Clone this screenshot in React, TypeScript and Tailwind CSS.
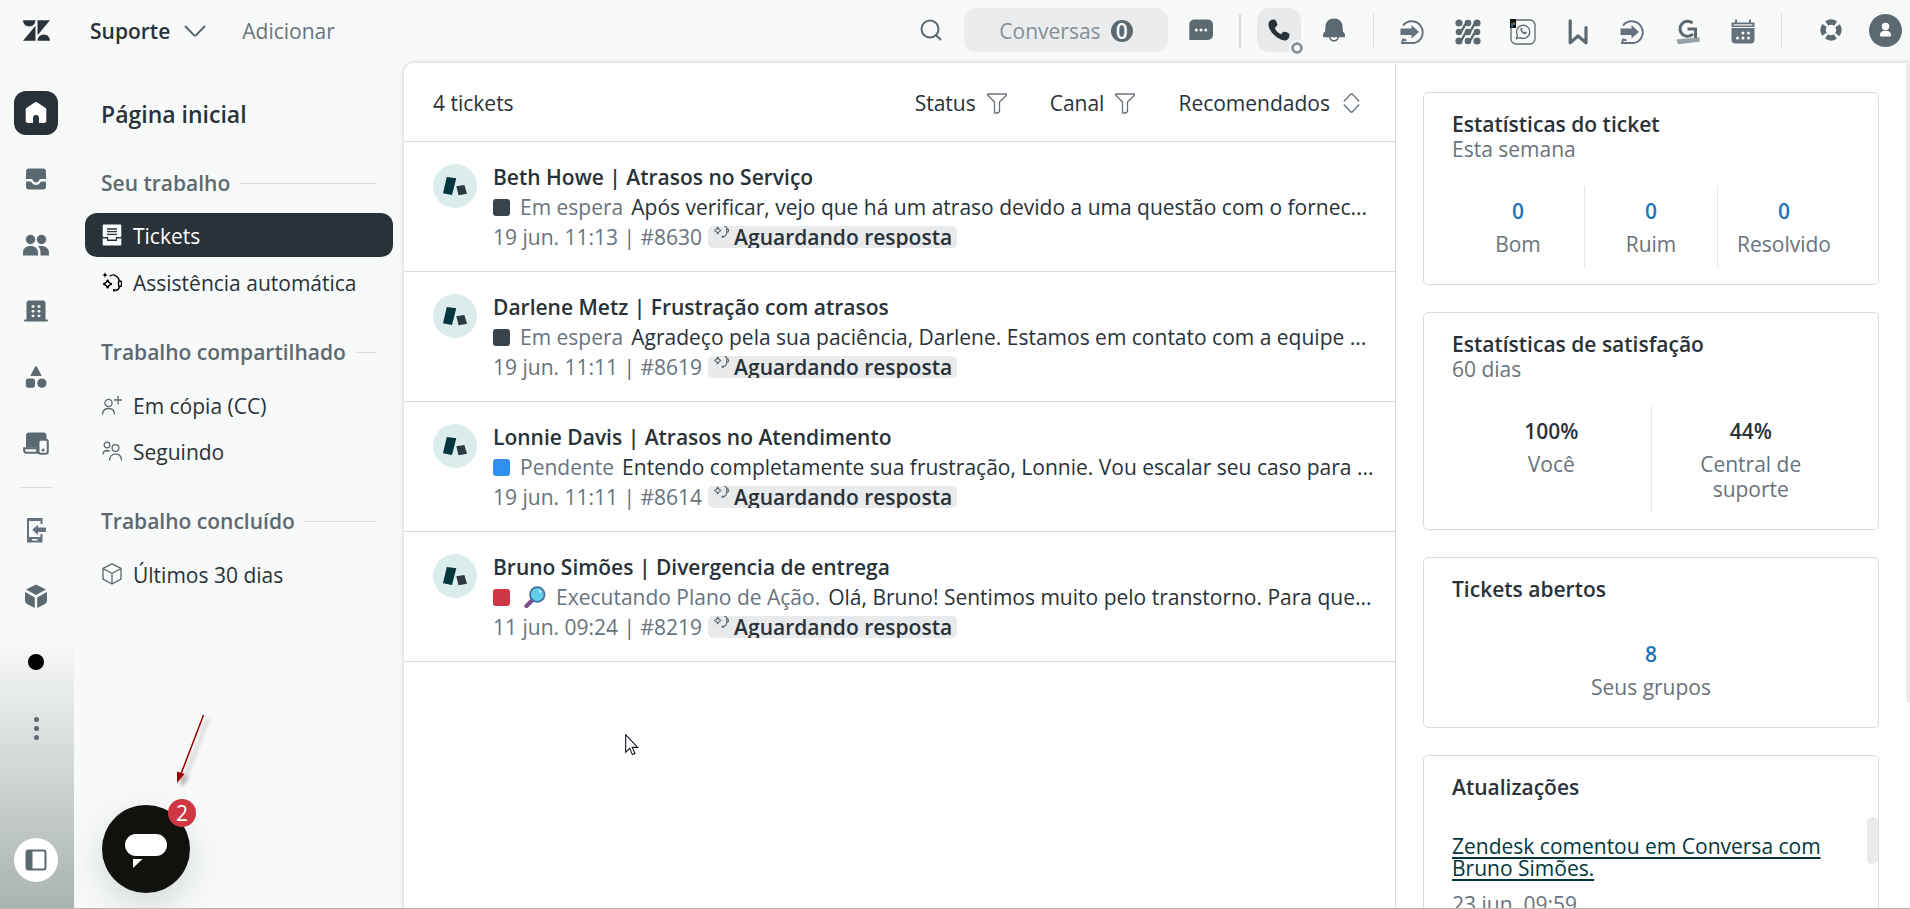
import type { ReactNode } from 'react';

interface Ticket {
  id: string;
  title: string;
  status: string;
  statusColor: string;
  message: string;
  date: string;
  magnifier?: boolean;
}

interface Stat {
  value: string;
  label: string;
}

const tickets: Ticket[] = [
  {
    id: '#8630',
    title: 'Beth Howe | Atrasos no Serviço',
    status: 'Em espera',
    statusColor: 'bg-[#39434b]',
    message: 'Após verificar, vejo que há um atraso devido a uma questão com o fornec...',
    date: '19 jun. 11:13',
  },
  {
    id: '#8619',
    title: 'Darlene Metz | Frustração com atrasos',
    status: 'Em espera',
    statusColor: 'bg-[#39434b]',
    message: 'Agradeço pela sua paciência, Darlene. Estamos em contato com a equipe ...',
    date: '19 jun. 11:11',
  },
  {
    id: '#8614',
    title: 'Lonnie Davis | Atrasos no Atendimento',
    status: 'Pendente',
    statusColor: 'bg-[#3091ec]',
    message: 'Entendo completamente sua frustração, Lonnie. Vou escalar seu caso para ...',
    date: '19 jun. 11:11',
  },
  {
    id: '#8219',
    title: 'Bruno Simões | Divergencia de entrega',
    status: 'Executando Plano de Ação.',
    statusColor: 'bg-[#cd3642]',
    message: 'Olá, Bruno! Sentimos muito pelo transtorno. Para que...',
    date: '11 jun. 09:24',
    magnifier: true,
  },
];

const HomeIcon = () => (
  <svg width="22" height="22" viewBox="0 0 22 22" fill="currentColor">
    <path d="M9.6.6a2.4 2.4 0 0 1 2.8 0l7.8 5.2A2 2 0 0 1 21.3 7.600V18.500a2.500 2.500 0 0 1-2.500 2.500H14v-5a3 3 0 0 0-6 0v5H3.200A2.500 2.500 0 0 1 .7 18.500V7.600a2 2 0 0 1 1.100-1.800z" />
  </svg>
);

const InboxIcon = () => (
  <svg width="22" height="22" viewBox="0 0 22 22" fill="currentColor">
    <path d="M4 .5h14a3 3 0 0 1 3 3V11h-5.500c-1.200 0-1.700 3.500-4.500 3.500S7.700 11 6.500 11H1V3.500a3 3 0 0 1 3-3z" />
    <path d="M1 13.500h4.500c1.300 0 1.800 3.500 5.500 3.500s4.200-3.500 5.500-3.500H21v5a3 3 0 0 1-3 3H4a3 3 0 0 1-3-3z" />
  </svg>
);

const PeopleIcon = () => (
  <svg width="28" height="22" viewBox="0 0 28 22" fill="currentColor">
    <circle cx="8.500" cy="5.500" r="4.700" />
    <circle cx="19.500" cy="5.500" r="4.700" />
    <path d="M1 21v-2.500c0-4 3-6.500 7.500-6.500s7.500 2.500 7.500 6.500V21a.6.6 0 0 1-.6.6H1.600A.6.6 0 0 1 1 21z" />
    <path d="M16 12.300c6-1.300 11 1.200 11 6.200V21a.6.6 0 0 1-.6.6H18.500v-3.500c0-2.300-.8-4.200-2.500-5.800z" />
  </svg>
);

const BuildingIcon = () => (
  <svg width="24" height="22" viewBox="0 0 24 22">
    <path d="M5 .5h14a2.500 2.500 0 0 1 2.500 2.500v16.500H23a.8.8 0 0 1 0 2H1a.8.8 0 0 1 0-2h1.500V3A2.500 2.500 0 0 1 5 .5z" fill="currentColor" />
    <g fill="#f8faf9">
      <rect x="7.500" y="5.300" width="3" height="2.400" rx="1" />
      <rect x="13.500" y="5.300" width="3" height="2.400" rx="1" />
      <rect x="7.500" y="10" width="3" height="2.400" rx="1" />
      <rect x="13.500" y="10" width="3" height="2.400" rx="1" />
      <rect x="7.500" y="14.700" width="3" height="2.400" rx="1" />
      <rect x="13.500" y="14.700" width="3" height="2.400" rx="1" />
    </g>
  </svg>
);

const ShapesIcon = () => (
  <svg width="22" height="22" viewBox="0 0 22 22" fill="currentColor">
    <path d="M10.100.8a1 1 0 0 1 1.800 0l4.400 8.200a.6.6 0 0 1-.6.9H6.300a.6.6 0 0 1-.6-.9z" />
    <rect x=".8" y="12.500" width="9.200" height="9.200" rx="2.300" />
    <circle cx="16.900" cy="17.100" r="4.700" />
  </svg>
);

const DevicesIcon = () => (
  <svg width="26" height="23" viewBox="0 0 26 23">
    <path d="M6 .5h14.500a3 3 0 0 1 3 3V7H18a3 3 0 0 0-3 3v5.500H3v-12a3 3 0 0 1 3-3z" fill="currentColor" />
    <path d="M1.200 16.200h13v4.600H3.500a2.300 2.300 0 0 1-2.300-2.300z" fill="#f8faf9" stroke="currentColor" strokeWidth="2" />
    <rect x="15.500" y="7.700" width="9.300" height="14" rx="2.200" fill="#f8faf9" stroke="currentColor" strokeWidth="2" />
    <circle cx="20.100" cy="18" r="1.500" fill="currentColor" />
  </svg>
);

const PhoneArrowIcon = () => (
  <svg width="20" height="26" viewBox="0 0 20 26" fill="#66717e">
    <path d="M1 1h15.500v6h-2V4H3v16h11.500v-3h2v8.500H1z" />
    <path d="M12 10.500h8V15h-8v3L6.200 12.800 12 7.800z" />
    <rect x="6" y="22" width="5.500" height="1.500" fill="#f8faf9" />
  </svg>
);

const CubeIcon = () => (
  <svg width="24" height="24" viewBox="0 0 24 24" fill="currentColor">
    <path d="M12 .5 22 5.600 12 11 2 5.600z" />
    <path d="M1 8l9.800 5.400V24L2.600 19.700A3 3 0 0 1 1 17z" />
    <path d="M23 8l-9.800 5.400V24l8.200-4.300A3 3 0 0 0 23 17z" />
  </svg>
);

const PanelIcon = () => (
  <svg width="22" height="22" viewBox="0 0 22 22">
    <rect x="1.500" y="1.500" width="19" height="19" rx="2" fill="none" stroke="currentColor" strokeWidth="2" />
    <path d="M2 2h5.500v18H2z" fill="currentColor" />
  </svg>
);

const BotSparkIcon = () => (
  <svg width="20" height="20" viewBox="0 0 20 20" fill="none" stroke="currentColor" strokeWidth="1.400">
    <path d="M5.600 7.600c.6 2.800 1.600 3.800 4.300 4.400-2.700.6-3.700 1.700-4.300 4.400C5 13.700 4 12.600 1.200 12 4 11.400 5 10.400 5.600 7.600z" />
    <path d="M3 0c.3 1.900 1 2.600 3 3-2 .4-2.700 1.100-3 3-.3-1.900-1-2.600-3-3 2-.4 2.700-1.100 3-3z" fill="currentColor" stroke="none" />
    <path d="M7.500 4.300C9.500 2.700 12 2.500 14 3.800c1.800 1.100 2.800 2.700 3.200 5" />
    <rect x="16.500" y="9" width="3" height="5.500" rx="1.500" />
    <path d="M17.500 14.500c-.5 2.500-1.800 3.700-4 4" />
    <path d="M11 18.300h2.500" strokeWidth="2.400" />
  </svg>
);

const BadgeSparkIcon = () => (
  <svg width="17" height="13" viewBox="0 0 17 13" fill="none" stroke="currentColor" strokeWidth="1.200">
    <path d="M4.700.9c.5 2.300 1.300 3.100 3.500 3.600-2.200.5-3 1.400-3.500 3.600-.5-2.200-1.300-3.100-3.500-3.600C3.400 4 4.200 3.200 4.700.9z" />
    <path d="M11 0c1.200.1 2.200.9 2.700 2v5M13.700 2.700c2.400-.5 2.400 4.100 0 3.800M13.700 7c-.3 2-1.400 3.200-3 3.700" />
    <path d="M8.700 10.700h2.300" strokeWidth="2" />
  </svg>
);

const FilterIcon = () => (
  <svg width="20" height="21" viewBox="0 0 20 21" fill="none" stroke="currentColor" strokeWidth="1.300">
    <path d="M.7 1h18.600v1.300L12.500 9v8.200c0 1.400-1 2.800-2.500 2.800H7.500V9L.7 2.300z" strokeLinejoin="round" />
  </svg>
);

const SearchIcon = () => (
  <svg width="22" height="22" viewBox="0 0 22 22" fill="none" stroke="currentColor" strokeWidth="2" strokeLinecap="round">
    <circle cx="10" cy="10" r="8.500" />
    <path d="M16.500 16.500l4 4" />
  </svg>
);

const ChatIcon = () => (
  <svg width="24" height="22" viewBox="0 0 24 22">
    <path d="M5 .5h14a5 5 0 0 1 5 5v10.500a5 5 0 0 1-5 5H.3V5.500a5 5 0 0 1 4.700-5z" fill="currentColor" />
    <g fill="#fff">
      <circle cx="7.300" cy="11" r="1.500" />
      <circle cx="12" cy="11" r="1.500" />
      <circle cx="16.700" cy="11" r="1.500" />
    </g>
  </svg>
);

const HandsetIcon = () => (
  <svg width="22" height="22" viewBox="0 0 22 22" fill="#293239">
    <path d="M1.200 2.600C2.500.9 5 .1 6.800.7c1.300.5 2.300 3 2.500 5 .1 1.700-2.600 2.500-2.300 3.500.6 2.200 3.500 5.100 5.700 5.700 1 .3 1.900-2.400 3.600-2.200 2 .2 4.500 1.200 5 2.500.5 1.800-.3 4.300-2 5.600-1.500 1-4.600.8-8-1.100C6.900 17.300 3.500 13.800 1.500 9.700.2 6.900.2 4 1.200 2.600z" />
  </svg>
);

const BellIcon = () => (
  <svg width="22" height="24" viewBox="0 0 22 24">
    <path d="M6.500 18.300a4.500 4.500 0 0 0 9 0" fill="#f8faf9" stroke="currentColor" strokeWidth="1.600" />
    <path d="M11 .5c5.300 0 8.300 3.500 8.600 8l.4 5.500c1.800.6 2 1.700 2 4.500 0 .5-.3.8-.8.8H.8A.8.8 0 0 1 0 18.500c0-2.800.2-3.900 2-4.500l.4-5.500C2.700 4 5.700.5 11 .5z" fill="currentColor" />
  </svg>
);

const CircleArrowIcon = () => (
  <svg width="26" height="26" viewBox="0 0 26 26">
    <path d="M3 6.500A11 11 0 1 1 14 24H2l1-3.500 3.500 1" fill="none" stroke="#66717e" strokeWidth="1.900" />
    <path d="M.5 9.500h11V6L19 13l-7.500 6.500V16H.5z" fill="#66717e" />
  </svg>
);

const DotsGridIcon = () => (
  <svg width="26" height="26" viewBox="0 0 26 26" fill="currentColor" stroke="currentColor">
    <g stroke="none">
      <circle cx="4" cy="4" r="3.600" />
      <circle cx="13" cy="4" r="3.300" />
      <circle cx="22" cy="4" r="3.600" />
      <circle cx="4" cy="13" r="3.300" />
      <circle cx="13" cy="13" r="3.300" />
      <circle cx="22" cy="13" r="3.300" />
      <circle cx="4" cy="22" r="3.600" />
      <circle cx="13" cy="22" r="3.300" />
      <circle cx="22" cy="22" r="3.600" />
    </g>
    <path d="M4 13c5 0 4-9 9-9M4 22c5 0 4-9 9-9s4-9 9-9M13 22c5 0 4-9 9-9" fill="none" strokeWidth="2.400" />
  </svg>
);

const WhatsappIcon = () => (
  <svg width="26" height="26" viewBox="0 0 26 26" fill="none">
    <rect x="1" y="1" width="24" height="24" rx="5" stroke="currentColor" strokeWidth="1.300" />
    <path d="M6.500 19.500l.9-3.500A6.600 6.600 0 1 1 10 18.600z" stroke="currentColor" strokeWidth="1.300" />
    <path d="M10.500 9.500c-1 2 3 6.500 5.500 5.500l.8-1.500-2-1-1 .8-2-2 .7-1-.8-1.600z" fill="currentColor" />
    <rect x="0" y="0" width="6" height="9" fill="#111" />
    <path d="M2 4v4" stroke="#1f8ad0" strokeWidth="1.500" />
    <path d="M4 3v3" stroke="#e8b33c" strokeWidth="1" />
  </svg>
);

const WIcon = () => (
  <svg width="20" height="26" viewBox="0 0 20 26" fill="none" stroke="currentColor" strokeWidth="3.200" strokeLinejoin="round">
    <path d="M2.200 1.800v22L10 17l8 6.800V8.500" strokeLinecap="round" />
  </svg>
);

const GIcon = () => (
  <svg width="24" height="26" viewBox="0 0 24 26">
    <path d="M.5 20.500l23-2.300v4.500L2 25.300z" fill="#98a1a6" />
    <path d="M16.500 4.200A7.500 7.500 0 1 0 17 15" fill="none" stroke="currentColor" strokeWidth="3" />
    <path d="M11.500 8.500H21V19h-3v-7.500h-6.500z" fill="currentColor" />
  </svg>
);

const CalendarIcon = () => (
  <svg width="24" height="26" viewBox="0 0 24 26" fill="#66717e">
    <path d="M.5 3.500H4V.5h2v3h12v-3h2v3h3.500V8H.5z" />
    <path d="M2.500 5.300h19v1.200h-19z" fill="#f8faf9" />
    <path d="M.5 9h23v11.500a4 4 0 0 1-4 4h-15a4 4 0 0 1-4-4z" />
    <g fill="#fff">
      <circle cx="12" cy="14" r="1.500" />
      <circle cx="17.500" cy="14" r="1.500" />
      <circle cx="6.500" cy="19" r="1.500" />
      <circle cx="12" cy="19" r="1.500" />
      <circle cx="17.500" cy="19" r="1.500" />
    </g>
  </svg>
);

const LifebuoyIcon = () => (
  <svg width="22" height="22" viewBox="0 0 22 22" fill="none" stroke="currentColor">
    <circle cx="11" cy="11" r="7.800" strokeWidth="5.400" strokeDasharray="9.250 3" strokeDashoffset="-1.500" transform="rotate(45 11 11)" />
  </svg>
);

const UserAvatarIcon = () => (
  <svg width="33" height="33" viewBox="0 0 33 33">
    <circle cx="16.500" cy="16.500" r="16.500" fill="currentColor" />
    <circle cx="16.500" cy="12.500" r="3.700" fill="#fff" />
    <path d="M11 20.500c0-2.500 2-3.800 5.500-3.800s5.500 1.300 5.500 3.800v1a1 1 0 0 1-1 1h-9a1 1 0 0 1-1-1z" fill="#fff" />
  </svg>
);

const TicketIcon = () => (
  <svg width="20" height="22" viewBox="0 0 20 22">
    <path d="M1.500.5h17a.8.8 0 0 1 .8.8V13h-5.500v2.500H6.200V13H.7V1.300a.8.8 0 0 1 .8-.8z" fill="#fff" />
    <path d="M.7 14.500H5V17h10v-2.500h4.300v6.200a.8.8 0 0 1-.8.8h-17a.8.8 0 0 1-.8-.8z" fill="#fff" />
    <path d="M5 5h10M5 7.700h10M5 10.400h10" stroke="#293239" strokeWidth="1.300" />
  </svg>
);

const UserPlusIcon = () => (
  <svg width="20" height="20" viewBox="0 0 20 20" fill="none" stroke="currentColor" strokeWidth="1.300">
    <circle cx="6.500" cy="8" r="3.600" />
    <path d="M.6 19.500c0-4 2.200-6 6-6s6 2 6 6M16 .8v8.500M11.700 5h8.300" />
  </svg>
);

const UsersIcon = () => (
  <svg width="20" height="20" viewBox="0 0 20 20" fill="none" stroke="currentColor" strokeWidth="1.300">
    <circle cx="5" cy="4" r="2.800" />
    <circle cx="13.500" cy="7" r="3.400" />
    <path d="M1 13.500C1 11 2.200 9.700 4.700 9.500c1.300 0 2.300.2 3.200.8M7.500 19.500c0-4 2.200-6.300 6-6.300s6 2.300 6 6.300" />
  </svg>
);

const BoxIcon = () => (
  <svg width="20" height="22" viewBox="0 0 20 22" fill="none" stroke="currentColor" strokeWidth="1.300" strokeLinejoin="round">
    <path d="M10 .8l9 4.600v10.700L10 21l-9-4.900V5.400zM1 5.500L10 10.300l9-4.800M10 10.300V21" />
  </svg>
);

const MagnifierIcon = () => (
  <svg width="22" height="22" viewBox="0 0 22 22">
    <path d="M9 13.500L2.500 20" stroke="#7d4c90" strokeWidth="4.200" strokeLinecap="round" />
    <circle cx="13.300" cy="8.500" r="7.300" fill="#63cdea" stroke="#3c6f9f" strokeWidth="1.700" />
    <circle cx="16" cy="5.500" r="1.200" fill="#d6f3fc" />
  </svg>
);

const AvatarMark = () => (
  <svg className="mt-[2px] shrink-0" width="44" height="44" viewBox="0 0 44 44">
    <circle cx="22" cy="22" r="22" fill="#daeceb" />
    <path d="M13.800 13l9.500 1.300L19 31l-9-1.700z" fill="#03363d" />
    <path d="M23.300 22.300l8.100-1.300 2.600 8.700-8.400 1.600z" fill="#2f3941" />
  </svg>
);

const railItems: { label: string; icon: ReactNode }[] = [
  { label: 'Visualizações', icon: <InboxIcon /> },
  { label: 'Clientes', icon: <PeopleIcon /> },
  { label: 'Organizações', icon: <BuildingIcon /> },
  { label: 'Objetos', icon: <ShapesIcon /> },
  { label: 'Dispositivos', icon: <DevicesIcon /> },
];

const appItems: { label: string; icon: ReactNode }[] = [
  { label: 'Encaminhar', icon: <CircleArrowIcon /> },
  { label: 'Integrações', icon: <DotsGridIcon /> },
  { label: 'WhatsApp', icon: <WhatsappIcon /> },
  { label: 'W', icon: <WIcon /> },
  { label: 'Transferir', icon: <CircleArrowIcon /> },
  { label: 'G', icon: <GIcon /> },
  { label: 'Calendário', icon: <CalendarIcon /> },
];

function IconButton({ label, children }: { label: string; children: ReactNode }) {
  return (
    <button aria-label={label} className="flex h-11 w-[55px] shrink-0 items-center justify-center">
      {children}
    </button>
  );
}

function Header() {
  return (
    <header className="flex h-[62px] shrink-0 items-center pr-[3px] pb-[2px] text-[#5c6970]">
      <a href="#" aria-label="Zendesk" className="flex w-[72px] justify-center">
        <svg width="27" height="27" viewBox="0 0 24 24" fill="#293239">
          <path d="M12.914 2.904V16.290L24 2.905H12.914zM0 2.906C0 5.966 2.483 8.450 5.543 8.450s5.542-2.484 5.543-5.544H0zm11.086 4.807L0 21.096h11.086V7.713zm7.370 7.840c-3.063 0-5.542 2.480-5.542 5.543H24c0-3.060-2.480-5.543-5.543-5.543z" />
        </svg>
      </a>
      <button className="ml-[18px] flex items-center gap-[14px] pt-[2px] font-semibold text-[#293239]">
        Suporte
        <svg width="22" height="12" viewBox="0 0 22 12" fill="none" stroke="#5c6970" strokeWidth="2" strokeLinecap="round" strokeLinejoin="round">
          <path d="M1.500 1.500l8 8.300a2 2 0 0 0 3 0l8-8.300" />
        </svg>
      </button>
      <button className="ml-9 pt-[2px] text-[#68737d]">Adicionar</button>
      <div className="ml-auto flex items-center">
        <IconButton label="Pesquisar"><SearchIcon /></IconButton>
        <button className="ml-[6px] flex h-11 w-[204px] items-center justify-center gap-[10px] rounded-xl bg-[#ebecee] pt-[2px] text-[#848f99]">
          Conversas
          <span className="flex size-[22px] items-center justify-center rounded-full bg-[#5c6970] font-semibold text-white">0</span>
        </button>
        <div className="ml-[5px]">
          <IconButton label="Mensagens"><ChatIcon /></IconButton>
        </div>
        <div className="mr-3 ml-[11px] h-[33px] w-[2px] bg-[#d8dcde]" />
        <button aria-label="Telefone" className="relative mr-[5px] ml-1 flex size-11 items-center justify-center rounded-xl bg-[#e8eaec]">
          <HandsetIcon />
          <span className="absolute -right-[2px] -bottom-[2px] size-3 rounded-full border-[3px] border-[#87929d] bg-white outline-2 outline-[#f8faf9]" />
        </button>
        <IconButton label="Notificações"><BellIcon /></IconButton>
        <div className="mr-[11px] ml-3 h-[33px] w-px bg-[#d8dcde]" />
        <div className="flex pt-[3px]">
          {appItems.map((item) => (
            <IconButton key={item.label} label={item.label}>{item.icon}</IconButton>
          ))}
        </div>
        <div className="mr-[21px] ml-[11px] h-[33px] w-px bg-[#d8dcde]" />
        <IconButton label="Ajuda"><LifebuoyIcon /></IconButton>
        <button aria-label="Perfil" className="ml-[5px] flex size-11 items-center justify-center">
          <UserAvatarIcon />
        </button>
      </div>
    </header>
  );
}

function Rail() {
  return (
    <nav className="flex w-[74px] shrink-0 flex-col items-center gap-[22px] bg-linear-to-b from-[#f8faf9] from-68% to-[#a9b3b1] pt-[29px] pr-[2px] pb-[26px]">
      <a href="#" aria-label="Página inicial" className="flex size-11 items-center justify-center rounded-xl bg-[#293239] text-white">
        <HomeIcon />
      </a>
      {railItems.map((item) => (
        <a key={item.label} href="#" aria-label={item.label} className="flex size-11 items-center justify-center">
          {item.icon}
        </a>
      ))}
      <div className="-mb-[2px] h-px w-[33px] bg-[#d8dcde]" />
      <a href="#" aria-label="Aplicativo" className="flex size-11 items-center justify-center">
        <PhoneArrowIcon />
      </a>
      <a href="#" aria-label="Produtos" className="flex size-11 items-center justify-center">
        <CubeIcon />
      </a>
      <a href="#" aria-label="Gravação" className="flex size-11 items-center justify-center">
        <span className="size-4 rounded-full bg-black" />
      </a>
      <button aria-label="Mais" className="flex size-11 flex-col items-center justify-center gap-1">
        <span className="size-[5px] rounded-full bg-[#5c6970]" />
        <span className="size-[5px] rounded-full bg-[#5c6970]" />
        <span className="size-[5px] rounded-full bg-[#5c6970]" />
      </button>
      <button aria-label="Alternar painel" className="mt-auto flex size-11 items-center justify-center rounded-full bg-white">
        <PanelIcon />
      </button>
    </nav>
  );
}

function NavHeading({ children }: { children: ReactNode }) {
  return (
    <h2 className="flex h-[30px] items-center gap-[10px] pr-[17px] pl-4 font-semibold text-[#5c6970]">
      {children}
      <span className="h-px flex-1 bg-[#d8dcde]" />
    </h2>
  );
}

function NavItem({ icon, active, children }: { icon: ReactNode; active?: boolean; children: ReactNode }) {
  return (
    <a
      href="#"
      className={`flex h-11 items-center gap-[11px] rounded-xl pl-[17px] ${active ? 'bg-[#293239] text-white' : ''}`}
    >
      <span className={`flex w-5 justify-center ${active ? '' : 'text-[#5c6970]'}`}>{icon}</span>
      <span className="pt-[2px]">{children}</span>
    </a>
  );
}

function Sidebar() {
  return (
    <aside className="w-[330px] shrink-0 pt-[37px] pr-[11px] pl-[11px]">
      <h1 className="pl-4 text-[23px] leading-[30px] font-semibold">Página inicial</h1>
      <div className="mt-[39px]">
        <NavHeading>Seu trabalho</NavHeading>
        <div className="mt-[15px] flex flex-col gap-[3px]">
          <NavItem active icon={<TicketIcon />}>Tickets</NavItem>
          <NavItem icon={<span className="text-black"><BotSparkIcon /></span>}>Assistência automática</NavItem>
        </div>
      </div>
      <div className="mt-[33px]">
        <NavHeading>Trabalho compartilhado</NavHeading>
        <div className="mt-4 flex flex-col gap-[2px]">
          <NavItem icon={<UserPlusIcon />}>Em cópia (CC)</NavItem>
          <NavItem icon={<UsersIcon />}>Seguindo</NavItem>
        </div>
      </div>
      <div className="mt-[33px]">
        <NavHeading>Trabalho concluído</NavHeading>
        <div className="mt-4">
          <NavItem icon={<BoxIcon />}>Últimos 30 dias</NavItem>
        </div>
      </div>
    </aside>
  );
}

function TicketRow({ ticket }: { ticket: Ticket }) {
  return (
    <li className="flex gap-4 border-b border-[#d8dcde] pt-5 pr-4 pb-[19px] pl-[29px]">
      <AvatarMark />
      <div className="min-w-0 flex-1 leading-[30px]">
        <h3 className="truncate font-semibold">{ticket.title}</h3>
        <p className="flex items-center">
          <span className={`mr-[10px] size-[17px] shrink-0 rounded-[3px] ${ticket.statusColor}`} />
          {ticket.magnifier && <span className="mr-[10px] ml-1 shrink-0"><MagnifierIcon /></span>}
          <span className="mr-2 shrink-0 text-[#68737d]">{ticket.status}</span>
          <a href="#" className="truncate">{ticket.message}</a>
        </p>
        <p className="flex items-center gap-[6px]">
          <span className="text-[#68737d]">{ticket.date} | {ticket.id}</span>
          <span className="flex h-[22px] gap-1 overflow-hidden rounded-[5px] bg-[#e8eaec] px-[5px] leading-[22px] font-semibold">
            <span className="text-[#5c6970]"><BadgeSparkIcon /></span>
            Aguardando resposta
          </span>
        </p>
      </div>
    </li>
  );
}

function TicketList() {
  return (
    <main className="relative min-w-0 flex-1 border-r border-[#d8dcde]">
      <div className="flex h-[79px] items-center border-b border-[#d8dcde] pt-[2px] pr-[35px] pl-[29px]">
        <span>4 tickets</span>
        <div className="ml-auto flex gap-[43px]">
          <button className="flex items-center gap-[11px]">Status <span className="text-[#68737d]"><FilterIcon /></span></button>
          <button className="flex items-center gap-[11px]">Canal <span className="text-[#68737d]"><FilterIcon /></span></button>
          <button className="flex items-center gap-[13px]">
            Recomendados
            <svg width="17" height="20" viewBox="0 0 17 20" fill="none" stroke="#68737d" strokeWidth="1.300">
              <path d="M.8 8.500l7-7.500h1.400l7 7.500M.8 11.500l7 7.500h1.400l7-7.500" />
            </svg>
          </button>
        </div>
      </div>
      <ul>
        {tickets.map((ticket) => (
          <TicketRow key={ticket.id} ticket={ticket} />
        ))}
      </ul>
      {/* mouse pointer */}
      <svg className="absolute top-[671px] left-[221px]" width="14" height="22" viewBox="0 0 14 22">
        <path d="M.7.7v17.500l4-3.800 2.700 6.200 2.600-1.100-2.700-6.100h5.300z" fill="#fff" stroke="#111122" strokeWidth="1.100" />
      </svg>
    </main>
  );
}

function StatGroup({ stats, link }: { stats: Stat[]; link?: boolean }) {
  return (
    <div className="mt-6 flex divide-x divide-[#e4e6e8]">
      {stats.map((stat) => (
        <div key={stat.label} className="min-w-0 flex-1 py-[10px] text-center">
          {link ? (
            <a href="#" className="block h-9 leading-[30px] font-semibold text-[#1f73b7]">{stat.value}</a>
          ) : (
            <div className="h-9 leading-[30px] font-semibold">{stat.value}</div>
          )}
          <div className="mx-auto max-w-[140px] text-[#68737d]">{stat.label}</div>
        </div>
      ))}
    </div>
  );
}

function Card({ title, subtitle, children }: { title: string; subtitle?: string; children: ReactNode }) {
  return (
    <section className="relative shrink-0 rounded-[5px] border border-[#d8dcde] px-7 pt-[19px] pb-[17px] leading-[25px]">
      <h2 className="font-semibold">{title}</h2>
      {subtitle ? <p className="text-[#68737d]">{subtitle}</p> : <div className="h-[3px]" />}
      {children}
    </section>
  );
}

function StatsPanel() {
  return (
    <aside className="relative flex w-[514px] shrink-0 flex-col gap-[27px] overflow-hidden pt-[29px] pr-[31px] pl-[27px]">
      <Card title="Estatísticas do ticket" subtitle="Esta semana">
        <StatGroup
          link
          stats={[
            { value: '0', label: 'Bom' },
            { value: '0', label: 'Ruim' },
            { value: '0', label: 'Resolvido' },
          ]}
        />
      </Card>
      <Card title="Estatísticas de satisfação" subtitle="60 dias">
        <StatGroup
          stats={[
            { value: '100%', label: 'Você' },
            { value: '44%', label: 'Central de suporte' },
          ]}
        />
      </Card>
      <Card title="Tickets abertos">
        <StatGroup link stats={[{ value: '8', label: 'Seus grupos' }]} />
      </Card>
      <Card title="Atualizações">
        <div className="mt-8 leading-[22px]">
          <a href="#" className="text-[#03363d] underline decoration-2 underline-offset-[3px]">
            Zendesk comentou em Conversa com Bruno Simões.
          </a>
          <p className="mt-[10px] leading-[30px] text-[#68737d]">23 jun. 09:59</p>
        </div>
        <span className="absolute top-[61px] right-0 h-[47px] w-[11px] rounded-full bg-[#e8eaec]" />
      </Card>
      <span className="absolute top-0 right-0 h-[640px] w-1 rounded-l bg-[#e8eaec]" />
    </aside>
  );
}

function ChatWidget() {
  return (
    <>
      <button
        aria-label="Abrir chat"
        className="absolute bottom-[15px] left-[102px] flex size-[88px] items-center justify-center rounded-full bg-[#11110d] shadow-[0_12px_36px_rgba(35,60,75,0.18)]"
      >
        <svg className="mt-1" width="44" height="36" viewBox="0 0 44 36" fill="#fff">
          <rect x="1" y="1" width="42" height="22" rx="11" />
          <path d="M9 26h9.500L9 35z" />
        </svg>
        <span className="absolute -top-[6px] -right-[6px] flex size-7 items-center justify-center rounded-full bg-[#cd3642] text-white">2</span>
      </button>
      <svg className="pointer-events-none absolute bottom-[115px] left-[170px]" width="44" height="80" viewBox="0 0 44 80">
        <g className="drop-shadow-[4px_4px_2px_rgba(0,0,0,0.35)]">
          <path d="M33.500 2L11 61" stroke="#900" strokeWidth="1.500" />
          <path d="M7 70V58.500l7.500 2.500z" fill="#900" />
        </g>
      </svg>
    </>
  );
}

export default function App() {
  return (
    <div className="relative flex h-screen flex-col overflow-hidden border-b border-[#c2b5ad] bg-[#f8faf9] font-['Open_Sans','Noto_Sans',sans-serif] text-[21px] leading-[30px] text-[#293239]">
      <Header />
      <div className="flex min-h-0 flex-1 text-[#5c6970]">
        <Rail />
        <div className="flex min-w-0 flex-1 text-[#293239]">
          <Sidebar />
          <div className="mt-px flex min-w-0 flex-1 rounded-tl-[10px] bg-white shadow-[0_0_4px_rgba(40,50,60,0.25)]">
            <TicketList />
            <StatsPanel />
          </div>
        </div>
      </div>
      <ChatWidget />
    </div>
  );
}
